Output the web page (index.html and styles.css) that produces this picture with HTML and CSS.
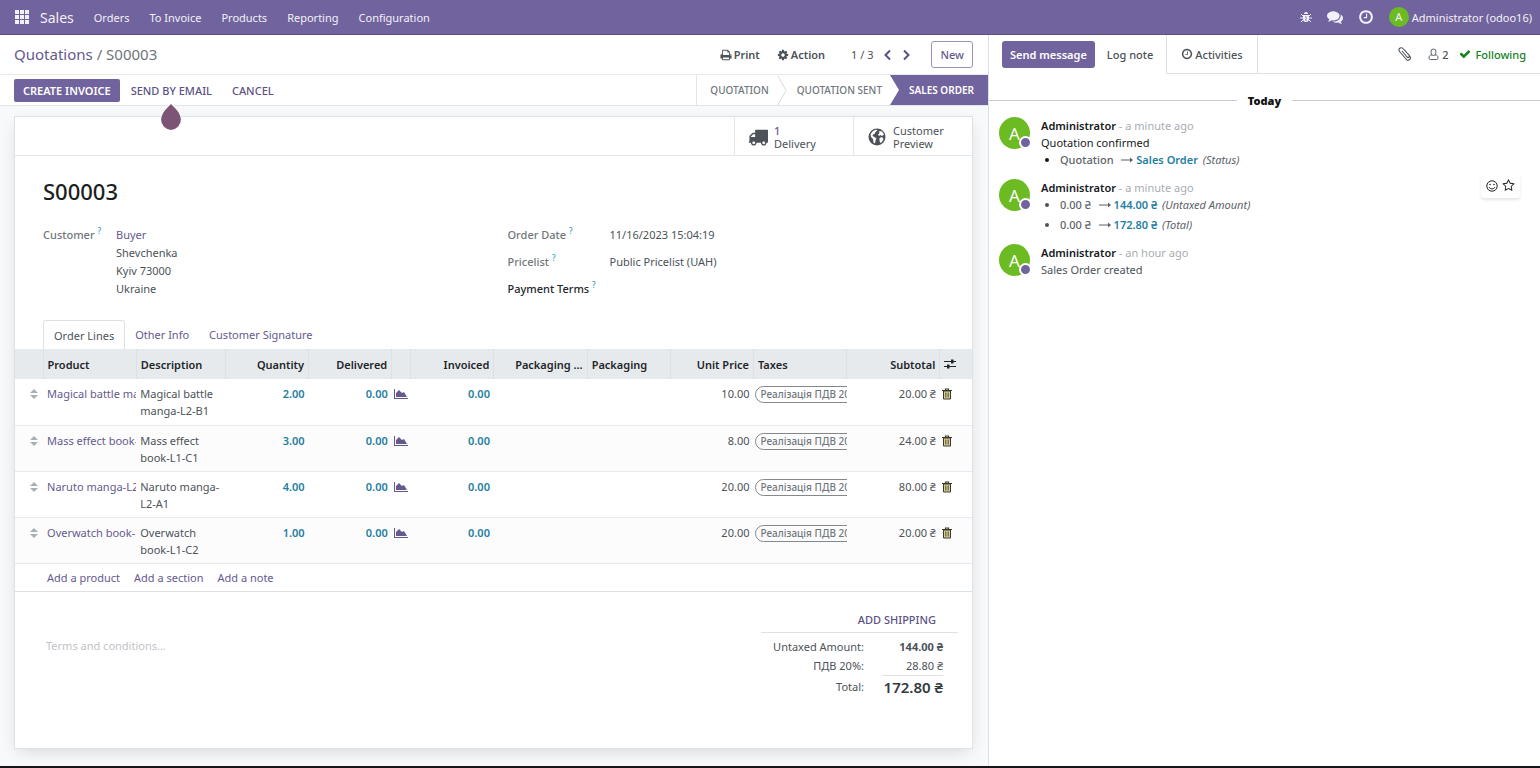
FILE: index.html
```html
<!DOCTYPE html>
<html lang="en">
<head>
    <meta charset="UTF-8">
    <meta name="viewport" content="width=device-width, initial-scale=1.0">
    <title>S00003 - Sales</title>
    <link rel="stylesheet" href="styles.css">
</head>
<body>

    <!-- Shared icons -->
    <svg class="sprite" aria-hidden="true">
        <symbol id="i-clock" viewBox="0 0 1792 1792"><path d="M1024 544v448q0 14-9 23t-23 9h-320q-14 0-23-9t-9-23v-64q0-14 9-23t23-9h224v-352q0-14 9-23t23-9h64q14 0 23 9t9 23zm416 352q0-148-73-273t-198-198-273-73-273 73-198 198-73 273 73 273 198 198 273 73 273-73 198-198 73-273zm224 0q0 209-103 385.5t-279.5 279.5-385.5 103-385.5-103-279.5-279.5-103-385.5 103-385.5 279.5-279.5 385.5-103 385.5 103 279.5 279.5 103 385.5z"/></symbol>
        <symbol id="i-sort" viewBox="0 0 10 12"><path d="M5 1l4 4H1zM1 7h8l-4 4z"/></symbol>
        <symbol id="i-chart" viewBox="0 0 14 12"><path d="M0 1h1v9h13v1H0zM2 9V5l3-3 3 3 2-1 3 5z"/></symbol>
        <symbol id="i-trash" viewBox="0 0 12 12"><path d="M2.500 3h7v8h-7z" fill="#d8d29a" stroke="currentColor"/><path d="M4.500 2.500V1h3v1.500M1 2.500h10" fill="none" stroke="currentColor" stroke-width="1.200"/><path d="M4.500 4.500v5M6 4.500v5M7.500 4.500v5" stroke="currentColor" stroke-width=".6"/></symbol>
        <symbol id="i-arrow" viewBox="0 0 12 8"><path d="M0 3.500h9V1.500L12 4 9 6.500v-2H0z"/></symbol>
    </svg>

    <nav class="navbar">
        <a class="apps" href="#" aria-label="Apps">
            <svg width="14" height="14" viewBox="0 0 14 14"><path d="M0 0h4v4H0zM5 0h4v4H5zM10 0h4v4h-4zM0 5h4v4H0zM5 5h4v4H5zM10 5h4v4h-4zM0 10h4v4H0zM5 10h4v4H5zM10 10h4v4h-4z"/></svg>
        </a>
        <a class="brand" href="#">Sales</a>
        <div class="menu">
            <a href="#">Orders</a>
            <a href="#">To Invoice</a>
            <a href="#">Products</a>
            <a href="#">Reporting</a>
            <a href="#">Configuration</a>
        </div>
        <div class="systray">
            <a href="#" aria-label="Debug">
                <svg width="12" height="12" viewBox="0 0 12 12"><path d="M4 3a2 2 0 0 1 4 0zM3 4h6v4a3 3 0 0 1-6 0z"/><path d="M1 3l2 2M11 3L9 5M0 7h12M3 9l-2 2M9 9l2 2" fill="none" stroke="currentColor"/><path d="M6 5v5" stroke="#71639e" stroke-width=".8"/></svg>
            </a>
            <a href="#" aria-label="Conversations">
                <svg width="16" height="16" viewBox="0 0 1792 1792"><path d="M1408 768q0 139-94 257t-256.500 186.500-353.500 68.500q-86 0-176-16-124 88-278 128-36 9-86 16h-3q-11 0-20.500-8t-11.500-21q-1-3-1-6.500t.5-6.500 2-6l2.500-5 3.500-5.500 4-5 4.500-5 4-4.500q5-6 23-25t26-29.500 22.500-29 25-38.500 20.500-44q-124-72-195-177t-71-224q0-139 94-257t256.500-186.500 353.500-68.500 353.500 68.500 256.500 186.500 94 257zm384 256q0 120-71 224.500t-195 176.500q10 24 20.500 44t25 38.500 22.500 29 26 29.500 23 25q1 1 4 4.500t4.500 5 4 5 3.500 5.500l2.500 5 2 6 .5 6.500-1 6.500q-3 14-13 22t-22 7q-50-7-86-16-154-40-278-128-90 16-176 16-271 0-472-132 58 4 88 4 161 0 309-45t264-129q125-92 192-212t67-254q0-77-23-152 129 71 204 178t75 230z"/></svg>
            </a>
            <a href="#" aria-label="Activities"><svg width="16" height="16"><use href="#i-clock"/></svg></a>
            <a class="user" href="#"><span class="user-avatar">A</span>Administrator (odoo16)</a>
        </div>
    </nav>

    <div class="content">
        <main class="form-view">
            <header class="control-panel">
                <div class="breadcrumb"><a href="#">Quotations</a> <span>/ S00003</span></div>
                <div class="cp-actions">
                    <button type="button">
                        <svg width="12" height="12" viewBox="0 0 1792 1792"><path d="M448 1536h896v-256h-896v256zm0-640h896v-384h-160q-40 0-68-28t-28-68v-160h-640v640zm1152 64q0-26-19-45t-45-19-45 19-19 45 19 45 45 19 45-19 19-45zm128 0v416q0 13-9.500 22.500t-22.500 9.500h-224v160q0 40-28 68t-68 28h-960q-40 0-68-28t-28-68v-160h-224q-13 0-22.500-9.500t-9.500-22.500v-416q0-79 56.500-135.500t135.500-56.500h64v-544q0-40 28-68t68-28h672q40 0 88 20t76 48l152 152q28 28 48 76t20 88v256h64q79 0 135.500 56.500t56.500 135.500z"/></svg>
                        Print
                    </button>
                    <button type="button">
                        <svg width="12" height="12" viewBox="0 0 1792 1792"><path d="M1152 896q0-106-75-181t-181-75-181 75-75 181 75 181 181 75 181-75 75-181zm512-109v222q0 12-8 23t-20 13l-185 28q-19 54-39 91 35 50 107 138 10 12 10 25t-9 23q-27 37-99 108t-94 71q-12 0-26-9l-138-108q-44 23-91 38-16 136-29 186-7 28-36 28h-222q-14 0-24.500-8.500t-11.500-21.500l-28-184q-49-16-90-37l-141 107q-10 9-25 9-14 0-25-11-126-114-165-168-7-10-7-23 0-12 8-23 15-21 51-66.500t54-70.500q-27-50-41-99l-183-27q-13-2-21-12.500t-8-23.500v-222q0-12 8-23t19-13l186-28q14-46 39-92-40-57-107-138-10-12-10-24 0-10 9-23 26-36 98.500-107.500t94.500-71.500q13 0 26 10l138 107q44-23 91-38 16-136 29-186 7-28 36-28h222q14 0 24.500 8.500t11.500 21.500l28 184q49 16 90 37l142-107q9-9 24-9 13 0 25 10 129 119 165 170 7 8 7 22 0 12-8 23-15 21-51 66.500t-54 70.500q26 50 41 98l183 28q13 2 21 12.500t8 23.500z"/></svg>
                        Action
                    </button>
                </div>
                <div class="pager">
                    <span>1 / 3</span>
                    <button type="button" aria-label="Previous"><svg width="9" height="12" viewBox="0 0 9 12"><path d="M7 1.500L2.500 6 7 10.500"/></svg></button>
                    <button type="button" aria-label="Next"><svg width="9" height="12" viewBox="0 0 9 12"><path d="M2 1.500L6.500 6 2 10.500"/></svg></button>
                </div>
                <button class="btn-new" type="button">New</button>
            </header>

            <div class="statusbar">
                <button class="btn-primary" type="button">CREATE INVOICE</button>
                <div class="tip-anchor">
                    <button class="btn-link" type="button">SEND BY EMAIL</button>
                    <svg class="tip" width="24" height="30" viewBox="0 0 24 30"><path d="M12 1C14 4 22.500 9 22.500 17.500a10.500 11 0 0 1-21 0C1.500 9 10 4 12 1z" fill="#7c5576" stroke="#fff" stroke-width="1.200"/></svg>
                </div>
                <button class="btn-link" type="button">CANCEL</button>
                <div class="stages">
                    <button type="button">QUOTATION</button>
                    <svg width="10" height="29" viewBox="0 0 10 29"><path d="M1 0l8 14.500L1 29"/></svg>
                    <button type="button">QUOTATION SENT</button>
                    <button class="active" type="button">SALES ORDER</button>
                </div>
            </div>

            <div class="sheet-bg">
                <section class="sheet">
                    <div class="stat-buttons">
                        <button type="button">
                            <svg width="20" height="20" viewBox="0 0 1792 1792"><path d="M640 1408q0-52-38-90t-90-38-90 38-38 90 38 90 90 38 90-38 38-90zm-384-512h384v-256h-158q-13 0-22 9l-195 195q-9 9-9 22v30zm1280 512q0-52-38-90t-90-38-90 38-38 90 38 90 90 38 90-38 38-90zm256-1088v1024q0 15-4 26.500t-13.500 18.500-16.500 11.500-23.500 6-22.500 2-25.500 0-22.500-.5q0 106-75 181t-181 75-181-75-75-181h-384q0 106-75 181t-181 75-181-75-75-181h-64q-3 0-22.500.5t-25.500 0-22.500-2-23.500-6-16.500-11.500-13.500-18.500-4-26.500q0-26 19-45t45-19v-320q0-8-.5-35t0-38 2.500-34.500 6.500-37 14-30.500 22.500-30l198-198q19-19 50.500-32t58.500-13h160v-192q0-26 19-45t45-19h1024q26 0 45 19t19 45z"/></svg>
                            <span><b>1</b><br>Delivery</span>
                        </button>
                        <button type="button">
                            <svg width="20" height="20" viewBox="0 0 20 20"><circle cx="10" cy="10" r="8.500"/><path d="M6 4l3-1.500 1.500 1L8.500 5l-1 2L6 7.500 5.500 9l2 1 2 1.500-1 2-.5 3-1.500-1L6 12 4 10 3.500 7zM12 4l3 .5 2 3-2 1.500-1.500-1-1.500 1-1-1.500L12.500 6zM12.500 11l2.500-1 1.500 2-1.500 3-1.500 1-1-2z" fill="#fff"/></svg>
                            <span>Customer<br>Preview</span>
                        </button>
                    </div>

                    <h1>S00003</h1>

                    <div class="groups">
                        <dl class="group">
                            <dt>Customer <sup>?</sup></dt>
                            <dd class="address"><a href="#">Buyer</a><br>Shevchenka<br>Kyiv 73000<br>Ukraine</dd>
                        </dl>
                        <dl class="group group-right">
                            <dt>Order Date <sup>?</sup></dt>
                            <dd>11/16/2023 15:04:19</dd>
                            <dt>Pricelist <sup>?</sup></dt>
                            <dd>Public Pricelist (UAH)</dd>
                            <dt class="editable">Payment Terms <sup>?</sup></dt>
                            <dd></dd>
                        </dl>
                    </div>

                    <div class="tabs">
                        <a class="active" href="#">Order Lines</a>
                        <a href="#">Other Info</a>
                        <a href="#">Customer Signature</a>
                    </div>

                    <table class="lines">
                        <colgroup>
                            <col class="c-handle"><col class="c-wide"><col class="c-desc"><col class="c-num"><col class="c-num"><col class="c-icon"><col class="c-num"><col class="c-wide"><col class="c-num"><col class="c-num"><col class="c-wide"><col class="c-wide"><col class="c-last">
                        </colgroup>
                        <thead>
                            <tr>
                                <th></th>
                                <th>Product</th>
                                <th>Description</th>
                                <th class="num">Quantity</th>
                                <th class="num">Delivered</th>
                                <th></th>
                                <th class="num">Invoiced</th>
                                <th class="num">Packaging ...</th>
                                <th>Packaging</th>
                                <th class="num">Unit Price</th>
                                <th>Taxes</th>
                                <th class="num">Subtotal</th>
                                <th><button type="button" aria-label="Optional columns"><svg width="12" height="10" viewBox="0 0 12 10"><path d="M0 2.500h12M0 7.500h12" stroke="currentColor"/><path d="M7 .5h2.500v4H7zM3 5.500h2.500v4H3z"/></svg></button></th>
                            </tr>
                        </thead>
                        <tbody>
                            <tr>
                                <td class="handle"><svg width="10" height="12"><use href="#i-sort"/></svg></td>
                                <td class="product"><a href="#">Magical battle manga-L2-B1</a></td>
                                <td>Magical battle manga-L2-B1</td>
                                <td class="num blue">2.00</td>
                                <td class="num blue">0.00</td>
                                <td class="forecast"><button type="button" aria-label="Forecast"><svg width="14" height="12"><use href="#i-chart"/></svg></button></td>
                                <td class="num blue">0.00</td>
                                <td></td>
                                <td></td>
                                <td class="num">10.00</td>
                                <td class="tax"><span>Реалізація ПДВ 20%</span></td>
                                <td class="num">20.00 ₴</td>
                                <td class="trash"><button type="button" aria-label="Delete"><svg width="12" height="12"><use href="#i-trash"/></svg></button></td>
                            </tr>
                            <tr>
                                <td class="handle"><svg width="10" height="12"><use href="#i-sort"/></svg></td>
                                <td class="product"><a href="#">Mass effect book-L1-C1</a></td>
                                <td>Mass effect book-L1-C1</td>
                                <td class="num blue">3.00</td>
                                <td class="num blue">0.00</td>
                                <td class="forecast"><button type="button" aria-label="Forecast"><svg width="14" height="12"><use href="#i-chart"/></svg></button></td>
                                <td class="num blue">0.00</td>
                                <td></td>
                                <td></td>
                                <td class="num">8.00</td>
                                <td class="tax"><span>Реалізація ПДВ 20%</span></td>
                                <td class="num">24.00 ₴</td>
                                <td class="trash"><button type="button" aria-label="Delete"><svg width="12" height="12"><use href="#i-trash"/></svg></button></td>
                            </tr>
                            <tr>
                                <td class="handle"><svg width="10" height="12"><use href="#i-sort"/></svg></td>
                                <td class="product"><a href="#">Naruto manga-L2-A1</a></td>
                                <td>Naruto manga-L2-A1</td>
                                <td class="num blue">4.00</td>
                                <td class="num blue">0.00</td>
                                <td class="forecast"><button type="button" aria-label="Forecast"><svg width="14" height="12"><use href="#i-chart"/></svg></button></td>
                                <td class="num blue">0.00</td>
                                <td></td>
                                <td></td>
                                <td class="num">20.00</td>
                                <td class="tax"><span>Реалізація ПДВ 20%</span></td>
                                <td class="num">80.00 ₴</td>
                                <td class="trash"><button type="button" aria-label="Delete"><svg width="12" height="12"><use href="#i-trash"/></svg></button></td>
                            </tr>
                            <tr>
                                <td class="handle"><svg width="10" height="12"><use href="#i-sort"/></svg></td>
                                <td class="product"><a href="#">Overwatch book-L1-C2</a></td>
                                <td>Overwatch book-L1-C2</td>
                                <td class="num blue">1.00</td>
                                <td class="num blue">0.00</td>
                                <td class="forecast"><button type="button" aria-label="Forecast"><svg width="14" height="12"><use href="#i-chart"/></svg></button></td>
                                <td class="num blue">0.00</td>
                                <td></td>
                                <td></td>
                                <td class="num">20.00</td>
                                <td class="tax"><span>Реалізація ПДВ 20%</span></td>
                                <td class="num">20.00 ₴</td>
                                <td class="trash"><button type="button" aria-label="Delete"><svg width="12" height="12"><use href="#i-trash"/></svg></button></td>
                            </tr>
                        </tbody>
                    </table>
                    <div class="add-line">
                        <a href="#">Add a product</a>
                        <a href="#">Add a section</a>
                        <a href="#">Add a note</a>
                    </div>

                    <div class="sheet-footer">
                        <textarea aria-label="Terms and conditions" placeholder="Terms and conditions..." rows="2"></textarea>
                        <div class="totals">
                            <button class="btn-link" type="button">ADD SHIPPING</button>
                            <table>
                                <tr><th>Untaxed Amount:</th><td><b>144.00 ₴</b></td></tr>
                                <tr><th>ПДВ 20%:</th><td>28.80 ₴</td></tr>
                                <tr class="total"><th>Total:</th><td>172.80 ₴</td></tr>
                            </table>
                        </div>
                    </div>
                </section>
            </div>
        </main>

        <aside class="chatter">
            <div class="topbar">
                <div class="compose">
                    <button class="btn-send" type="button">Send message</button>
                    <button class="btn-note" type="button">Log note</button>
                </div>
                <button class="btn-activities" type="button"><svg width="12" height="12"><use href="#i-clock"/></svg>Activities</button>
                <div class="follow">
                    <button class="attach" type="button" aria-label="Attachments"><svg width="13" height="14" viewBox="0 0 13 14"><path d="M4 4l5 6a1 1 0 0 0 2-2L5 1.500a2.200 2.200 0 0 0-3.500 3L8 12a2.300 2.300 0 0 0 4-2.500L7 3.500" fill="none" stroke="currentColor" stroke-width="1.100"/></svg></button>
                    <button type="button"><svg width="11" height="12" viewBox="0 0 11 12"><path d="M5.500 1a2.500 2.700 0 0 1 2.500 3c0 1-.5 1.800-1 2.500C9 7 10 8 10 10c0 1-.5 1.500-1.500 1.500h-6C1.500 11.500 1 11 1 10c0-2 1-3 3-3.500C3.500 5.800 3 5 3 4a2.500 2.700 0 0 1 2.500-3zM3 6.500c1.500 1.300 3.500 1.300 5 0" fill="none" stroke="currentColor" stroke-width=".9"/></svg>2</button>
                    <button class="following" type="button"><svg width="12" height="12" viewBox="0 0 1792 1792"><path d="M1671 566q0 40-28 68l-724 724-136 136q-28 28-68 28t-68-28l-136-136-362-362q-28-28-28-68t28-68l136-136q28-28 68-28t68 28l294 295 656-657q28-28 68-28t68 28l136 136q28 28 28 68z"/></svg>Following</button>
                </div>
            </div>

            <div class="separator"><b>Today</b></div>

            <article class="message">
                <div class="avatar">A</div>
                <div class="message-body">
                    <div class="author"><b>Administrator</b> - a minute ago</div>
                    <p class="dark">Quotation confirmed</p>
                    <ul>
                        <li class="dark"><span class="old">Quotation</span> <svg width="12" height="8"><use href="#i-arrow"/></svg> <b>Sales Order</b> <i>(Status)</i></li>
                    </ul>
                </div>
            </article>

            <article class="message">
                <div class="avatar">A</div>
                <div class="message-body">
                    <div class="author"><b>Administrator</b> - a minute ago</div>
                    <ul>
                        <li><span class="old">0.00 ₴</span> <svg width="12" height="8"><use href="#i-arrow"/></svg> <b>144.00 ₴</b> <i>(Untaxed Amount)</i></li>
                        <li><span class="old">0.00 ₴</span> <svg width="12" height="8"><use href="#i-arrow"/></svg> <b>172.80 ₴</b> <i>(Total)</i></li>
                    </ul>
                </div>
                <div class="message-actions">
                    <button type="button" aria-label="Add a reaction"><svg width="12" height="12" viewBox="0 0 12 12"><circle cx="6" cy="6" r="5.200" fill="none" stroke="currentColor"/><circle cx="4" cy="4.500" r=".8"/><circle cx="8" cy="4.500" r=".8"/><path d="M3 7c1 2.500 5 2.500 6 0" fill="none" stroke="currentColor"/></svg></button>
                    <button type="button" aria-label="Mark as todo"><svg width="13" height="13" viewBox="0 0 1792 1792"><path d="M1201 1004l306-297-422-62-189-382-189 382-422 62 306 297-73 421 378-199 377 199zm527-357q0 22-26 48l-363 354 86 500q1 7 1 20 0 50-41 50-19 0-40-12l-449-236-449 236q-22 12-40 12-21 0-31.500-14.500t-10.500-35.500q0-6 2-20l86-500-364-354q-25-27-25-48 0-37 56-46l502-73 225-455q19-41 49-41t49 41l225 455 502 73q56 9 56 46z"/></svg></button>
                </div>
            </article>

            <article class="message">
                <div class="avatar">A</div>
                <div class="message-body">
                    <div class="author"><b>Administrator</b> - an hour ago</div>
                    <p>Sales Order created</p>
                </div>
            </article>
        </aside>
    </div>

</body>
</html>
```
FILE: styles.css
```css
*,
*::before,
*::after {
    box-sizing: border-box;
}

body {
    margin: 0;
    min-height: 100vh;
    display: flex;
    flex-direction: column;
    font-family: "Noto Sans", "Open Sans", sans-serif;
    font-size: 11px;
    line-height: 17px;
    color: #4c5258;
    background-color: #fff;
    border-bottom: 2px solid #17151a;
}

a {
    color: #66598f;
    text-decoration: none;
}

button {
    font: inherit;
    color: inherit;
    background: none;
    border: none;
    padding: 0;
    cursor: pointer;
    white-space: nowrap;
}

svg {
    fill: currentColor;
    flex-shrink: 0;
}

.sprite {
    position: absolute;
    width: 0;
    height: 0;
}

/* Navbar */
.navbar {
    display: flex;
    align-items: center;
    height: 35px;
    padding: 0 8px 0 15px;
    background-color: #71639e;
    border-bottom: 1px solid #5a4f7f;
}

.navbar a {
    display: flex;
    align-items: center;
    color: #f3f1f7;
}

.navbar .brand {
    margin: 0 20px 0 11px;
    font-size: 14px;
}

.menu {
    display: flex;
    gap: 20px;
}

.systray {
    display: flex;
    align-items: center;
    gap: 15px;
    margin-left: auto;
}

.user-avatar {
    width: 20px;
    height: 20px;
    margin-right: 3px;
    line-height: 20px;
    text-align: center;
    border-radius: 50%;
    background-color: #6cbb23;
}

/* Page columns */
.content {
    flex: 1;
    display: grid;
    grid-template-columns: minmax(0, 1fr) 552px;
}

.form-view {
    display: flex;
    flex-direction: column;
}

.control-panel {
    display: flex;
    align-items: center;
    height: 40px;
    padding: 0 15px 0 14px;
    border-bottom: 1px solid #e7e9ed;
}

.breadcrumb {
    font-size: 15px;
    color: #6c757d;
}

.cp-actions {
    display: flex;
    gap: 17px;
    margin-left: auto;
    font-weight: 600;
}

.cp-actions button {
    display: flex;
    align-items: center;
    gap: 2px;
}

.pager {
    display: flex;
    align-items: center;
    gap: 10px;
    margin: 0 20px 0 26px;
}

.pager svg {
    display: block;
    fill: none;
    stroke: #5a4f8c;
    stroke-width: 2;
}

.btn-new {
    padding: 4px 8px;
    font-weight: 500;
    color: #66598f;
    border: 1px solid #9c92bd;
    border-radius: 3px;
}

/* Status bar */
.statusbar {
    display: flex;
    align-items: center;
    height: 31px;
    padding-left: 14px;
    border-bottom: 1px solid #e2e5e9;
}

.btn-primary {
    height: 23px;
    padding: 0 9px;
    margin-right: 11px;
    font-weight: 600;
    color: #fff;
    background-color: #71639e;
    border-radius: 2px;
}

.btn-link {
    font-weight: 500;
    color: #5d5285;
}

.tip-anchor {
    position: relative;
    margin-right: 20px;
}

.tip {
    position: absolute;
    top: 20px;
    left: 50%;
    margin-left: -12px;
}

.stages {
    display: flex;
    align-items: center;
    align-self: stretch;
    margin-left: auto;
    padding-left: 3px;
    border-left: 1px solid #e2e5e9;
    font-size: 10px;
    color: #71777d;
}

.stages button {
    height: 100%;
    padding: 0 8px 0 10px;
    font-weight: 500;
}

.stages svg {
    fill: none;
    stroke: #d9dce1;
}

.stages .active {
    padding: 0 14px 0 19px;
    font-weight: 600;
    color: #fff;
    background-color: #71639e;
    clip-path: polygon(0 0, 100% 0, 100% 100%, 0 100%, 9px 50%);
}

/* Sheet */
.sheet-bg {
    flex: 1;
    display: flex;
    padding: 10px 15px 17px 14px;
    background-color: #f8f9fa;
}

.sheet {
    flex: 1;
    min-width: 0;
    background-color: #fff;
    border: 1px solid #dee2e6;
    box-shadow: 0 5px 16px -4px rgba(0, 0, 0, 0.16);
}

.stat-buttons {
    display: flex;
    justify-content: flex-end;
    border-bottom: 1px solid #e2e5e9;
}

.stat-buttons button {
    display: flex;
    align-items: center;
    gap: 6px;
    width: 119px;
    height: 38px;
    padding: 2px 0 0 13px;
    line-height: 13px;
    text-align: left;
    border-left: 1px solid #e2e5e9;
}

.stat-buttons b {
    font-weight: 500;
    color: #66598f;
}

h1 {
    margin: 21px 28px 16px;
    font-size: 22px;
    line-height: 28px;
    font-weight: 500;
    color: #1b1f23;
}

.groups {
    display: grid;
    grid-template-columns: 1fr 1fr;
    gap: 28px;
    margin: 0 28px 13px;
}

.group {
    display: grid;
    grid-template-columns: 73px 1fr;
    grid-auto-rows: minmax(27px, auto);
    align-items: start;
    margin: 0;
    padding-top: 5px;
}

.group-right {
    grid-template-columns: 102px 1fr;
}

.group dt {
    color: #71777d;
    font-weight: 500;
}

.group dt.editable {
    color: #22262a;
}

.group dd {
    margin: 0;
}

.group .address {
    line-height: 18px;
}

sup {
    font-size: 8px;
    line-height: 8px;
    color: #2d9fc4;
}

.tabs {
    display: flex;
    padding-left: 28px;
}

.tabs a {
    padding: 6px 10px 5px;
}

.tabs .active {
    color: #4c5258;
    border: 1px solid #dee2e6;
    border-bottom: none;
    border-radius: 3px 3px 0 0;
}

/* Order lines */
.lines {
    width: 100%;
    table-layout: fixed;
    border-collapse: collapse;
}

.c-handle {
    width: 28px;
}

.c-wide {
    width: 93px;
}

.c-desc {
    width: 89px;
}

.c-num {
    width: 83px;
}

.c-icon {
    width: 19px;
}

.c-last {
    width: 32px;
}

.lines th {
    height: 30px;
    padding: 0 4px;
    text-align: left;
    font-weight: 600;
    white-space: nowrap;
    color: #22262a;
    background-color: #e7eaed;
    border-right: 1px solid #dde1e5;
}

.lines th:last-child {
    border-right: none;
}

.lines td {
    height: 46px;
    padding: 6px 4px 5px;
    vertical-align: top;
    border-bottom: 1px solid #e7e9ed;
}

.lines tbody tr:nth-child(even) {
    background-color: #fcfcfc;
}

.lines .num {
    text-align: right;
}

.lines td svg {
    display: block;
    margin-top: 3px;
}

.lines .handle {
    color: #a9afb6;
    padding-left: 14px;
}

.lines .product {
    padding-right: 0;
    overflow: hidden;
    white-space: nowrap;
}

.lines .blue {
    font-weight: 600;
    color: #1f7ea1;
}

.lines .forecast {
    padding: 6px 2px;
    color: #66598f;
}

.lines .trash {
    padding-left: 1px;
    color: #3a3826;
}

.lines .tax {
    padding: 6px 0 5px 2px;
    overflow: hidden;
}

.tax span {
    display: inline-block;
    padding: 0 4px;
    line-height: 15px;
    font-size: 10px;
    font-weight: 500;
    white-space: nowrap;
    color: #71777d;
    border: 1px solid #83888d;
    border-radius: 9px;
}

.add-line {
    display: flex;
    gap: 14px;
    padding: 5px 32px;
    border-bottom: 1px solid #dee2e6;
}

/* Terms and totals */
.sheet-footer {
    display: flex;
    justify-content: space-between;
    padding: 19px 14px 0 31px;
}

textarea {
    width: 400px;
    margin-top: 26px;
    padding: 0;
    font: inherit;
    color: inherit;
    border: none;
    resize: none;
}

textarea::placeholder {
    color: #bfc3c7;
}

.totals {
    width: 197px;
    text-align: right;
}

.totals .btn-link {
    margin: 0 22px 4px 0;
}

.totals table {
    width: 100%;
    padding: 4px 15px 0 0;
    border-top: 1px solid #dee2e6;
    border-spacing: 0;
}

.totals th {
    padding: 0 18px 0 0;
    font-weight: 400;
}

.totals td {
    width: 61px;
    height: 19px;
    padding: 0;
    white-space: nowrap;
}

.totals .total td {
    height: 24px;
    font-size: 15px;
    font-weight: 600;
    color: #343a40;
    border-top: 1px solid #dee2e6;
}

/* Chatter */
.chatter {
    border-left: 1px solid #dee2e6;
}

.topbar {
    display: flex;
    height: 39px;
}

.compose {
    display: flex;
    align-items: center;
    gap: 12px;
    padding: 0 13px;
    font-weight: 500;
}

.btn-send {
    height: 27px;
    padding: 0 8px;
    font-weight: 600;
    color: #fff;
    background-color: #71639e;
    border-radius: 3px;
}

.btn-activities {
    display: flex;
    align-items: center;
    gap: 2px;
    padding: 0 14px;
    font-weight: 500;
    border: solid #dee2e6;
    border-width: 0 1px 1px;
}

.follow {
    flex: 1;
    display: flex;
    align-items: center;
    justify-content: flex-end;
    gap: 11px;
    padding-right: 14px;
    font-weight: 500;
    border-bottom: 1px solid #dee2e6;
}

.follow button {
    display: flex;
    align-items: center;
    gap: 3px;
}

.follow .attach {
    margin-right: 6px;
}

.follow .following {
    gap: 4px;
    color: #14821f;
}

.separator {
    display: flex;
    align-items: center;
    gap: 11px;
    margin: 18px 0 8px;
    font-weight: 600;
    color: #111;
}

.separator::before,
.separator::after {
    content: "";
    flex: 1;
    border-top: 1px solid #c6c8cb;
}

.message {
    position: relative;
    display: flex;
    gap: 11px;
    padding: 0 20px 11px 10px;
}

.avatar {
    position: relative;
    width: 31px;
    height: 32px;
    line-height: 34px;
    font-size: 17px;
    text-align: center;
    color: #fff;
    border-radius: 50%;
    background-color: #6cbb23;
}

/* presence dot */
.avatar::after {
    content: "";
    position: absolute;
    right: -2px;
    bottom: 0;
    width: 13px;
    height: 13px;
    border: 2px solid #fff;
    border-radius: 50%;
    background-color: #71639e;
}

.author {
    color: #a9adb2;
}

.author b {
    font-weight: 600;
    color: #16191c;
}

.message p {
    margin: 0;
}

.message .dark {
    color: #16191c;
}

.message ul {
    margin: 0;
    padding-left: 19px;
}

.message li + li {
    margin-top: 3px;
}

.old {
    margin-right: 5px;
    font-weight: 500;
    color: #5d6369;
}

.message li b {
    font-weight: 600;
    color: #1f7ea1;
}

.message li svg,
.message li i {
    color: #5d6369;
}

.message li b + i {
    margin-left: 2px;
}

.message-actions {
    position: absolute;
    top: -6px;
    right: 20px;
    display: flex;
    gap: 4px;
    padding: 6px 5px;
    color: #22262a;
    border-radius: 3px;
    box-shadow: 0 2px 3px rgba(0, 0, 0, 0.1);
}

.message-actions svg {
    display: block;
}
```
